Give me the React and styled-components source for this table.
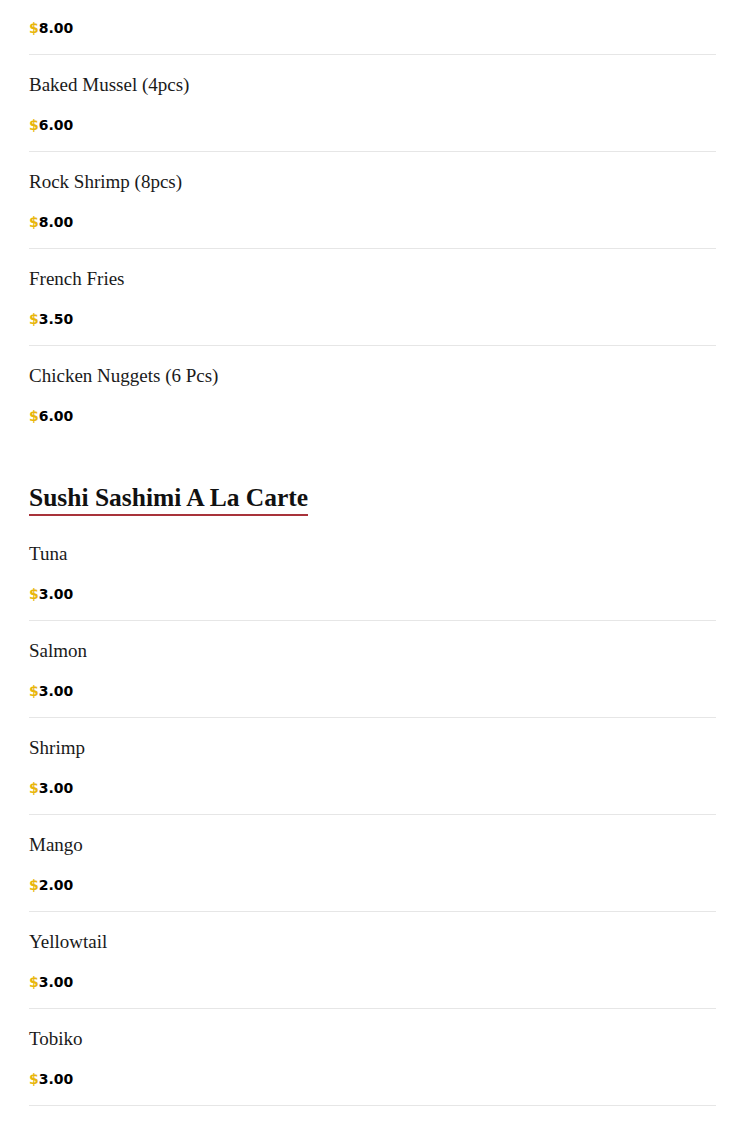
import React from 'react'
import styled, { createGlobalStyle } from 'styled-components'

const GlobalStyle = createGlobalStyle`
  body {
    margin: 0;
    background: #fff;
  }
`

const Page = styled.div`
  padding: 0 29px;
  background: #fff;
`

const Section = styled.section`
  display: flex;
  flex-direction: column;
  margin-bottom: ${props => props.last ? '0' : '40px'};
`

const SectionTitle = styled.h2`
  align-self: flex-start;
  margin: 0 0 8px 0;
  font-family: "Liberation Serif", "DejaVu Serif", serif;
  font-weight: 700;
  font-size: 25.5px;
  line-height: 32px;
  color: #111;
  border-bottom: 2px solid #a8323a;
`

const Item = styled.div`
  display: flex;
  flex-direction: column;
  padding: 18px 0 16px 0;
  border-bottom: ${props => props.noLine ? 'none' : '1px solid #e6e6e6'};
`

const ItemName = styled.div`
  font-family: "Liberation Serif", "DejaVu Serif", serif;
  font-size: 19px;
  line-height: 24px;
  color: #1a1a1a;
  margin-bottom: 18px;
`

const Price = styled.div`
  font-family: "DejaVu Sans", "Liberation Sans", sans-serif;
  font-weight: 700;
  font-size: 14px;
  line-height: 20px;
  color: #000;
  span {
    color: #e8b60c;
  }
`

const firstItems = [
  { name: 'Baked Mussel (4pcs)', price: '6.00' },
  { name: 'Rock Shrimp (8pcs)', price: '8.00' },
  { name: 'French Fries', price: '3.50' },
  { name: 'Chicken Nuggets (6 Pcs)', price: '6.00' }
]

const sushiItems = [
  { name: 'Tuna', price: '3.00' },
  { name: 'Salmon', price: '3.00' },
  { name: 'Shrimp', price: '3.00' },
  { name: 'Mango', price: '2.00' },
  { name: 'Yellowtail', price: '3.00' },
  { name: 'Tobiko', price: '3.00' }
]

const MenuPrice = ({ value }) => (
  <Price><span>$</span>{value}</Price>
)

const App = () => {
  return (
    <Page>
      <GlobalStyle />
      <Section>
        {/* item cut off at the top of the view, only its price shows */}
        <Item>
          <MenuPrice value='8.00' />
        </Item>
        {firstItems.map((item, i) => (
          <Item key={item.name} noLine={i === firstItems.length - 1}>
            <ItemName>{item.name}</ItemName>
            <MenuPrice value={item.price} />
          </Item>
        ))}
      </Section>
      <Section last>
        <SectionTitle>Sushi Sashimi A La Carte</SectionTitle>
        {sushiItems.map(item => (
          <Item key={item.name}>
            <ItemName>{item.name}</ItemName>
            <MenuPrice value={item.price} />
          </Item>
        ))}
      </Section>
    </Page>
  )
}

export default App
